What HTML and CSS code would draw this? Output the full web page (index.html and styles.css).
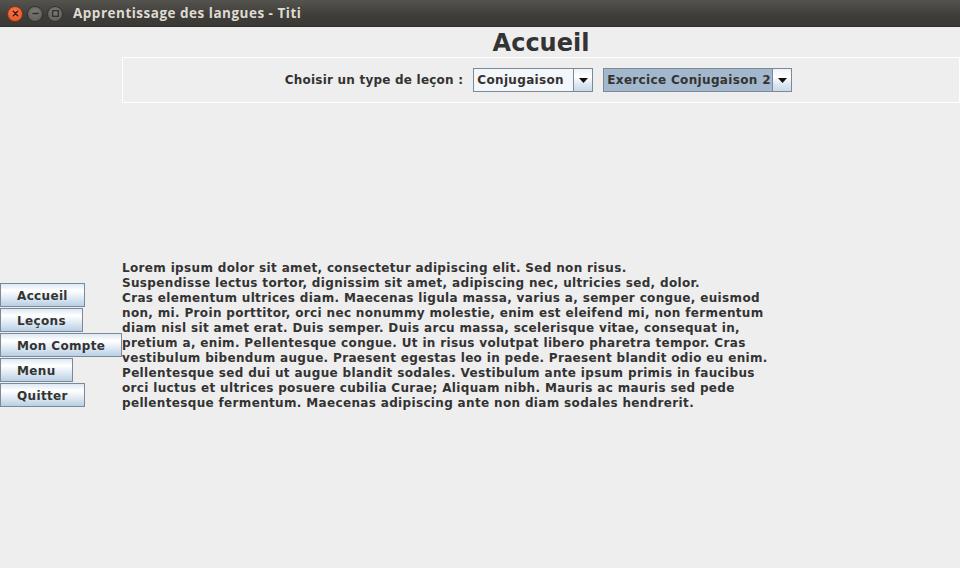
FILE: index.html
```html
<!DOCTYPE html>
<html lang="fr">
<head>
<meta charset="utf-8">
<title>Apprentissage des langues - Titi</title>
<link rel="stylesheet" href="styles.css">
</head>
<body>
<div class="window">
  <div class="titlebar">
    <div class="wbtns">
      <span class="wbtn close"><svg width="15" height="15" viewBox="0 0 15 15"><path d="M5.3 5.3 L9.7 9.7 M9.7 5.3 L5.3 9.7" stroke="#3a1a10" stroke-width="1.4" stroke-linecap="round"/></svg></span>
      <span class="wbtn"><svg width="15" height="15" viewBox="0 0 15 15"><path d="M4.5 7.5 H10.5" stroke="#2e2d2a" stroke-width="1.5"/></svg></span>
      <span class="wbtn"><svg width="15" height="15" viewBox="0 0 15 15"><rect x="4.7" y="4.7" width="5.6" height="5.6" fill="none" stroke="#2e2d2a" stroke-width="1.2"/></svg></span>
    </div>
    <div class="wtitle">Apprentissage des langues - Titi</div>
  </div>
  <div class="main">
    <div class="side">
      <button class="btn">Accueil</button>
      <button class="btn">Leçons</button>
      <button class="btn">Mon Compte</button>
      <button class="btn">Menu</button>
      <button class="btn">Quitter</button>
    </div>
    <div class="content">
      <h1 class="heading">Accueil</h1>
      <div class="panel">
        <span class="label">Choisir un type de leçon :</span>
        <div class="combo c1">
          <span class="cval">Conjugaison</span>
          <span class="carrow"><svg width="9" height="5" viewBox="0 0 9 5"><path d="M0 0 H9 L4.5 5 Z" fill="#111"/></svg></span>
        </div>
        <div class="combo c2">
          <span class="cval sel">Exercice Conjugaison 2</span>
          <span class="carrow"><svg width="9" height="5" viewBox="0 0 9 5"><path d="M0 0 H9 L4.5 5 Z" fill="#111"/></svg></span>
        </div>
      </div>
      <p class="text">Lorem ipsum dolor sit amet, consectetur adipiscing elit. Sed non risus.<br>
Suspendisse lectus tortor, dignissim sit amet, adipiscing nec, ultricies sed, dolor.<br>
Cras elementum ultrices diam. Maecenas ligula massa, varius a, semper congue, euismod<br>
non, mi. Proin porttitor, orci nec nonummy molestie, enim est eleifend mi, non fermentum<br>
diam nisl sit amet erat. Duis semper. Duis arcu massa, scelerisque vitae, consequat in,<br>
pretium a, enim. Pellentesque congue. Ut in risus volutpat libero pharetra tempor. Cras<br>
vestibulum bibendum augue. Praesent egestas leo in pede. Praesent blandit odio eu enim.<br>
Pellentesque sed dui ut augue blandit sodales. Vestibulum ante ipsum primis in faucibus<br>
orci luctus et ultrices posuere cubilia Curae; Aliquam nibh. Mauris ac mauris sed pede<br>
pellentesque fermentum. Maecenas adipiscing ante non diam sodales hendrerit.</p>
    </div>
  </div>
</div>
</body>
</html>
```
FILE: styles.css
```css
* { box-sizing: border-box; }
html, body {
  margin: 0;
  padding: 0;
  background: #eeeeee;
}
body {
  font-family: "DejaVu Sans", sans-serif;
  font-weight: bold;
  font-size: 12px;
  letter-spacing: 0.34px;
  color: #333333;
}
.window {
  width: 960px;
  height: 568px;
  overflow: hidden;
}
.titlebar {
  height: 27px;
  display: flex;
  align-items: center;
  background: linear-gradient(#55534e, #3e3d39 60%, #3a3935);
  border-bottom: 1px solid #2f2e2b;
  letter-spacing: 0;
}
.wbtns {
  display: flex;
  gap: 4px;
  padding-left: 7px;
  padding-top: 1px;
}
.wbtn {
  width: 16px;
  height: 16px;
  border-radius: 50%;
  background: radial-gradient(circle at 50% 35%, #7b7a75, #5a5954);
  border: 1px solid #34332f;
  display: flex;
  align-items: center;
  justify-content: center;
  overflow: hidden;
}
.wbtn svg { display: block; flex: none; }
.wbtn.close {
  background: radial-gradient(circle at 50% 35%, #f77a4c, #e1511e);
  border-color: #8a3214;
}
.wtitle {
  margin-left: 10px;
  font-family: "Open Sans", "Lato", sans-serif;
  font-weight: bold;
  font-size: 13.5px;
  letter-spacing: 0.5px;
  color: #dfdbd2;
}
.main {
  display: grid;
  grid-template-columns: 122px 1fr;
  height: 541px;
}
.side {
  padding-top: 256px;
  display: flex;
  flex-direction: column;
  align-items: flex-start;
  gap: 1px;
}
.btn {
  font: inherit;
  letter-spacing: inherit;
  color: #333333;
  height: 24px;
  padding: 2px 16px 0 16px;
  line-height: 20px;
  border: 1px solid #7a8a99;
  border-radius: 0;
  background: linear-gradient(#dde8f3 0%, #ffffff 30%, #e8eff6 55%, #b8cfe5 100%);
  white-space: nowrap;
  text-align: left;
}
.content {
  display: flex;
  flex-direction: column;
}
.heading {
  margin: 0;
  padding-top: 2px;
  height: 30px;
  line-height: 28px;
  font-size: 24px;
  letter-spacing: 0;
  text-align: center;
  color: #333333;
}
.panel {
  border: 1px solid #ffffff;
  padding: 10px 5px 10px 0;
  display: flex;
  justify-content: center;
  align-items: center;
  gap: 10px;
}
.label {
  letter-spacing: 0.22px;
  line-height: 24px;
}
.combo {
  display: flex;
  height: 24px;
  border: 1px solid #7a8a99;
  background: #f4f7fa;
}
.c1 { width: 120px; }
.c2 { width: 189px; }
.cval {
  flex: 1;
  padding-left: 3px;
  line-height: 22px;
  white-space: nowrap;
  overflow: hidden;
}
.cval.sel { background: #a3b8cc; }
.carrow {
  width: 19px;
  flex: none;
  border-left: 1px solid #7a8a99;
  background: linear-gradient(#eef3f8, #ffffff 35%, #dde7f1 70%, #c9d9e9);
  display: flex;
  align-items: center;
  justify-content: center;
}
.carrow svg { display: block; margin-left: 1px; }
.text {
  margin: 158px 0 0 0;
  line-height: 15px;
  white-space: nowrap;
}
```
